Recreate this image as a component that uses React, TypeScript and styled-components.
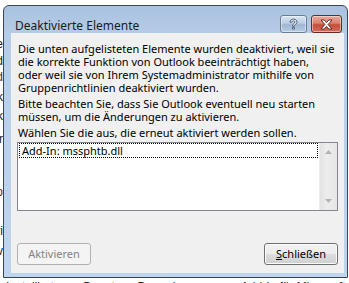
import React from "react";
import styled, { createGlobalStyle } from "styled-components";

const GlobalStyle = createGlobalStyle`
  html, body {
    margin: 0;
    padding: 0;
    background: #ffffff;
    overflow: hidden;
  }
`;

const uiFont = `"Noto Sans", "Open Sans", "Liberation Sans", sans-serif`;

const Desktop = styled.div`
  position: relative;
  width: 349px;
  height: 283px;
  overflow: hidden;
  background: #ffffff;
  font-family: ${uiFont};
`;

// the document that sits behind the dialog
const DocPage = styled.div`
  height: 283px;
  display: flex;
  flex-direction: column;
  font-family: "Liberation Sans", sans-serif;
  font-size: 12px;
  line-height: 13px;
  color: #222;
`;

const DocMargin = styled.div`
  width: 3px;
  display: flex;
  flex-direction: column;
  padding-top: 38px;
`;

const DocWord = styled.div<{ $gap?: number; $tint?: boolean }>`
  display: flex;
  justify-content: flex-end;
  white-space: nowrap;
  margin-top: ${(p) => p.$gap ?? 0}px;
  color: ${(p) => (p.$tint ? "#6b2230" : "#222")};
`;

const DocFoot = styled.div`
  margin-top: auto;
  margin-bottom: -11px;
  padding-left: 6px;
  white-space: nowrap;
`;

const Window = styled.div`
  position: absolute;
  left: 3px;
  top: 5px;
  width: 343px;
  height: 271px;
  display: flex;
  flex-direction: column;
  border: 1px solid #3a4654;
  border-radius: 6px 6px 0 0;
  background: linear-gradient(#a9c2df 0px, #b6cde8 30px, #bfd5ee 100%);
`;

const TitleBar = styled.div`
  height: 27px;
  box-sizing: border-box;
  padding: 9px 5px 0 11px;
  display: flex;
  align-items: flex-start;
`;

const Title = styled.div`
  flex: 1;
  padding-top: 3px;
  font-size: 12px;
  line-height: 16px;
  color: #1b1b1b;
`;

const CaptionButton = styled.div<{ $kind: "help" | "close" }>`
  width: ${(p) => (p.$kind === "close" ? 31 : 27)}px;
  height: 18px;
  margin-left: ${(p) => (p.$kind === "close" ? 4 : 0)}px;
  box-sizing: border-box;
  border: 1px solid ${(p) => (p.$kind === "close" ? "#6d2a22" : "#6b7d93")};
  border-radius: 3px;
  display: flex;
  align-items: center;
  justify-content: center;
  background: ${(p) =>
    p.$kind === "close"
      ? "linear-gradient(#e9a99c 0%, #d98170 45%, #c44c38 55%, #d2705c 100%)"
      : "linear-gradient(#d9e5f3 0%, #bccde3 45%, #9fb5d2 55%, #b9cde4 100%)"};
  box-shadow: inset 0 0 0 1px rgba(255, 255, 255, 0.45);
`;

const Client = styled.div`
  flex: 1;
  margin: 0 3px 4px 7px;
  background: #f0f0f0;
  display: flex;
  flex-direction: column;
  padding: 9px 6px 8px 6px;
`;

const Para = styled.p`
  margin: 0 0 3px 1px;
  font-size: 11px;
  line-height: 13px;
  color: #000;
  white-space: nowrap;
`;

const ListBox = styled.div`
  height: 69px;
  box-sizing: border-box;
  border: 1px solid #828790;
  background: #ffffff;
  display: flex;
`;

const ListItems = styled.div`
  flex: 1;
  padding: 0 1px;
`;

const ListItem = styled.div<{ $focused?: boolean }>`
  height: 15px;
  box-sizing: border-box;
  border: 1px dotted ${(p) => (p.$focused ? "#000" : "transparent")};
  padding-left: 2px;
  font-size: 11px;
  line-height: 13px;
  color: #000;
`;

const ScrollBar = styled.div`
  width: 17px;
  background: linear-gradient(90deg, #e3e3e3, #ededed 40%, #e6e6e6);
  border-left: 1px solid #ececec;
  display: flex;
  flex-direction: column;
  justify-content: space-between;
  align-items: center;
  padding: 7px 0 7px 0;
`;

const ButtonRow = styled.div`
  margin-top: auto;
  display: flex;
  justify-content: space-between;
`;

const Button = styled.button`
  width: 74px;
  height: 22px;
  padding: 0;
  border-radius: 3px;
  font-family: ${uiFont};
  font-size: 11px;
  line-height: 18px;
  border: 1px solid #707070;
  color: #000;
  background: linear-gradient(#f2f2f2 0%, #ebebeb 48%, #dddddd 52%, #cfcfcf 100%);
  box-shadow: inset 0 0 0 1px #fbfbfb;

  &:disabled {
    border-color: #adb2b5;
    color: #838383;
    background: #f4f4f4;
    box-shadow: none;
  }
`;

const Arrow = ({ down }: { down?: boolean }) => (
  <svg width="7" height="4" viewBox="0 0 7 4">
    <path d={down ? "M0 0H7L3.5 4Z" : "M0 4H7L3.5 0Z"} fill="#b4b4b4" />
  </svg>
);

const HelpGlyph = () => (
  <svg width="11" height="13" viewBox="0 0 11 13">
    <path
      d="M2 4.2C2 2.3 3.4 1.2 5.5 1.2S9 2.3 9 4c0 1.6-1.2 2.1-2.2 2.8-.5.4-.6.7-.6 1.4H4.6c0-1.3.3-1.9 1.2-2.6.8-.6 1.3-.9 1.3-1.6 0-.7-.6-1.1-1.6-1.1S3.8 3.4 3.8 4.2Z M4.5 9.3h1.9v1.8H4.5Z"
      fill="#fff"
      stroke="#40536b"
      strokeWidth="0.9"
    />
  </svg>
);

const CloseGlyph = () => (
  <svg width="13" height="11" viewBox="0 0 13 11">
    <path
      d="M1 1h3.2l2.3 2.6L8.8 1H12L8.1 5.5 12 10H8.8L6.5 7.4 4.2 10H1l3.9-4.5Z"
      fill="#fff"
      stroke="#5a2019"
      strokeWidth="0.9"
      strokeLinejoin="round"
    />
  </svg>
);

const App: React.FC = () => {
  return (
    <Desktop>
      <GlobalStyle />
      <DocPage>
        <DocMargin>
          <DocWord>neue</DocWord>
          <DocWord $gap={4}>und</DocWord>
          <DocWord $gap={3} $tint>Feld</DocWord>
          <DocWord $gap={7}>Blick</DocWord>
          <DocWord $gap={6}>Link</DocWord>
          <DocWord $gap={10}>Tor</DocWord>
          <DocWord $gap={40} $tint>Ordnero</DocWord>
          <DocWord $gap={26}>Navi</DocWord>
          <DocWord $gap={7}>aktiv</DocWord>
        </DocMargin>
        <DocFoot>
          Installiert vom Benutzer, Bemerkungen zum Add-In für Microsoft Office Professional
        </DocFoot>
      </DocPage>

      <Window>
        <TitleBar>
          <Title>Deaktivierte Elemente</Title>
          <CaptionButton $kind="help">
            <HelpGlyph />
          </CaptionButton>
          <CaptionButton $kind="close">
            <CloseGlyph />
          </CaptionButton>
        </TitleBar>

        <Client>
          <Para>
            Die unten aufgelisteten Elemente wurden deaktiviert, weil sie
            <br />
            die korrekte Funktion von Outlook beeinträchtigt haben,
            <br />
            oder weil sie von Ihrem Systemadministrator mithilfe von
            <br />
            Gruppenrichtlinien deaktiviert wurden.
          </Para>
          <Para>
            Bitte beachten Sie, dass Sie Outlook eventuell neu starten
            <br />
            müssen, um die Änderungen zu aktivieren.
          </Para>
          <Para>Wählen Sie die aus, die erneut aktiviert werden sollen.</Para>

          <ListBox>
            <ListItems>
              <ListItem $focused>Add-In: mssphtb.dll</ListItem>
            </ListItems>
            <ScrollBar>
              <Arrow />
              <Arrow down />
            </ScrollBar>
          </ListBox>

          <ButtonRow>
            <Button disabled>Aktivieren</Button>
            <Button>
              <u>S</u>chließen
            </Button>
          </ButtonRow>
        </Client>
      </Window>
    </Desktop>
  );
};

export default App;
